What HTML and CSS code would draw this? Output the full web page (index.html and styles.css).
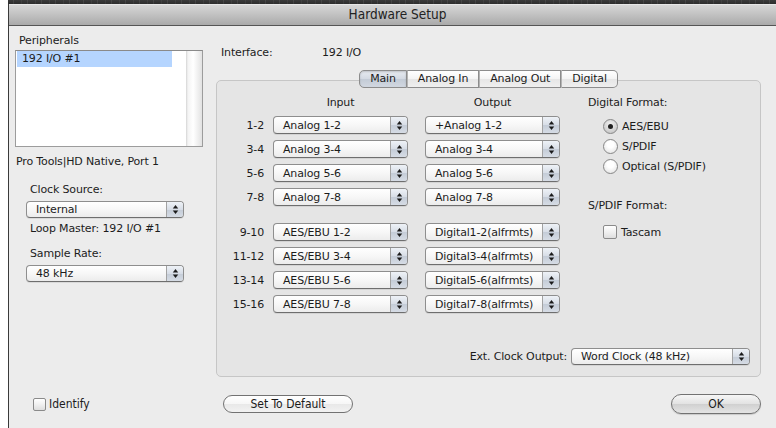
FILE: index.html
```html
<!DOCTYPE html>
<html lang="en">
<head>
<meta charset="utf-8">
<title>Hardware Setup</title>
<link rel="stylesheet" href="styles.css">
</head>
<body>
<div class="desk-strip"></div>
<div class="window">
  <div class="titlebar">Hardware Setup</div>

  <div class="content">
    <div class="left">
      <div class="peri-label">Peripherals</div>
      <div class="listbox">
        <div class="list-rows">
          <div class="list-row selected">192 I/O #1</div>
        </div>
        <div class="list-scroll"></div>
      </div>
      <div class="port">Pro Tools|HD Native, Port 1</div>

      <div class="field-label clock-label">Clock Source:</div>
      <div class="popup popup-side">
        <span class="popup-text">Internal</span>
        <span class="popup-arrows"><svg width="7" height="11" viewBox="0 0 7 11"><polygon points="3.5,1 6.2,4.6 0.8,4.6"/><polygon points="0.8,6.4 6.2,6.4 3.5,10"/></svg></span>
      </div>
      <div class="field-label loop-label">Loop Master: 192 I/O #1</div>
      <div class="field-label rate-label">Sample Rate:</div>
      <div class="popup popup-side">
        <span class="popup-text">48 kHz</span>
        <span class="popup-arrows"><svg width="7" height="11" viewBox="0 0 7 11"><polygon points="3.5,1 6.2,4.6 0.8,4.6"/><polygon points="0.8,6.4 6.2,6.4 3.5,10"/></svg></span>
      </div>
    </div>

    <div class="right">
      <div class="iface"><span class="iface-key">Interface:</span><span>192 I/O</span></div>

      <div class="tabs">
        <div class="tab active">Main</div>
        <div class="tab">Analog In</div>
        <div class="tab">Analog Out</div>
        <div class="tab">Digital</div>
      </div>

      <div class="group">
        <div class="group-main">
          <div class="io">
            <div class="io-head">
              <span class="io-gutter"></span>
              <span class="io-col">Input</span>
              <span class="io-col io-out">Output</span>
            </div>

            <div class="io-row">
              <span class="ch">1-2</span>
              <div class="popup"><span class="popup-text">Analog 1-2</span><span class="popup-arrows"><svg width="7" height="11" viewBox="0 0 7 11"><polygon points="3.5,1 6.2,4.6 0.8,4.6"/><polygon points="0.8,6.4 6.2,6.4 3.5,10"/></svg></span></div>
              <div class="popup io-out"><span class="popup-text">+Analog 1-2</span><span class="popup-arrows"><svg width="7" height="11" viewBox="0 0 7 11"><polygon points="3.5,1 6.2,4.6 0.8,4.6"/><polygon points="0.8,6.4 6.2,6.4 3.5,10"/></svg></span></div>
            </div>
            <div class="io-row">
              <span class="ch">3-4</span>
              <div class="popup"><span class="popup-text">Analog 3-4</span><span class="popup-arrows"><svg width="7" height="11" viewBox="0 0 7 11"><polygon points="3.5,1 6.2,4.6 0.8,4.6"/><polygon points="0.8,6.4 6.2,6.4 3.5,10"/></svg></span></div>
              <div class="popup io-out"><span class="popup-text">Analog 3-4</span><span class="popup-arrows"><svg width="7" height="11" viewBox="0 0 7 11"><polygon points="3.5,1 6.2,4.6 0.8,4.6"/><polygon points="0.8,6.4 6.2,6.4 3.5,10"/></svg></span></div>
            </div>
            <div class="io-row">
              <span class="ch">5-6</span>
              <div class="popup"><span class="popup-text">Analog 5-6</span><span class="popup-arrows"><svg width="7" height="11" viewBox="0 0 7 11"><polygon points="3.5,1 6.2,4.6 0.8,4.6"/><polygon points="0.8,6.4 6.2,6.4 3.5,10"/></svg></span></div>
              <div class="popup io-out"><span class="popup-text">Analog 5-6</span><span class="popup-arrows"><svg width="7" height="11" viewBox="0 0 7 11"><polygon points="3.5,1 6.2,4.6 0.8,4.6"/><polygon points="0.8,6.4 6.2,6.4 3.5,10"/></svg></span></div>
            </div>
            <div class="io-row">
              <span class="ch">7-8</span>
              <div class="popup"><span class="popup-text">Analog 7-8</span><span class="popup-arrows"><svg width="7" height="11" viewBox="0 0 7 11"><polygon points="3.5,1 6.2,4.6 0.8,4.6"/><polygon points="0.8,6.4 6.2,6.4 3.5,10"/></svg></span></div>
              <div class="popup io-out"><span class="popup-text">Analog 7-8</span><span class="popup-arrows"><svg width="7" height="11" viewBox="0 0 7 11"><polygon points="3.5,1 6.2,4.6 0.8,4.6"/><polygon points="0.8,6.4 6.2,6.4 3.5,10"/></svg></span></div>
            </div>

            <div class="io-spacer"></div>

            <div class="io-row">
              <span class="ch">9-10</span>
              <div class="popup"><span class="popup-text">AES/EBU 1-2</span><span class="popup-arrows"><svg width="7" height="11" viewBox="0 0 7 11"><polygon points="3.5,1 6.2,4.6 0.8,4.6"/><polygon points="0.8,6.4 6.2,6.4 3.5,10"/></svg></span></div>
              <div class="popup io-out"><span class="popup-text">Digital1-2(alfrmts)</span><span class="popup-arrows"><svg width="7" height="11" viewBox="0 0 7 11"><polygon points="3.5,1 6.2,4.6 0.8,4.6"/><polygon points="0.8,6.4 6.2,6.4 3.5,10"/></svg></span></div>
            </div>
            <div class="io-row">
              <span class="ch">11-12</span>
              <div class="popup"><span class="popup-text">AES/EBU 3-4</span><span class="popup-arrows"><svg width="7" height="11" viewBox="0 0 7 11"><polygon points="3.5,1 6.2,4.6 0.8,4.6"/><polygon points="0.8,6.4 6.2,6.4 3.5,10"/></svg></span></div>
              <div class="popup io-out"><span class="popup-text">Digital3-4(alfrmts)</span><span class="popup-arrows"><svg width="7" height="11" viewBox="0 0 7 11"><polygon points="3.5,1 6.2,4.6 0.8,4.6"/><polygon points="0.8,6.4 6.2,6.4 3.5,10"/></svg></span></div>
            </div>
            <div class="io-row">
              <span class="ch">13-14</span>
              <div class="popup"><span class="popup-text">AES/EBU 5-6</span><span class="popup-arrows"><svg width="7" height="11" viewBox="0 0 7 11"><polygon points="3.5,1 6.2,4.6 0.8,4.6"/><polygon points="0.8,6.4 6.2,6.4 3.5,10"/></svg></span></div>
              <div class="popup io-out"><span class="popup-text">Digital5-6(alfrmts)</span><span class="popup-arrows"><svg width="7" height="11" viewBox="0 0 7 11"><polygon points="3.5,1 6.2,4.6 0.8,4.6"/><polygon points="0.8,6.4 6.2,6.4 3.5,10"/></svg></span></div>
            </div>
            <div class="io-row">
              <span class="ch">15-16</span>
              <div class="popup"><span class="popup-text">AES/EBU 7-8</span><span class="popup-arrows"><svg width="7" height="11" viewBox="0 0 7 11"><polygon points="3.5,1 6.2,4.6 0.8,4.6"/><polygon points="0.8,6.4 6.2,6.4 3.5,10"/></svg></span></div>
              <div class="popup io-out"><span class="popup-text">Digital7-8(alfrmts)</span><span class="popup-arrows"><svg width="7" height="11" viewBox="0 0 7 11"><polygon points="3.5,1 6.2,4.6 0.8,4.6"/><polygon points="0.8,6.4 6.2,6.4 3.5,10"/></svg></span></div>
            </div>
          </div>

          <div class="digital">
            <div class="dig-head">Digital Format:</div>
            <div class="radios">
              <div class="opt"><span class="radio on"></span><span>AES/EBU</span></div>
              <div class="opt"><span class="radio"></span><span>S/PDIF</span></div>
              <div class="opt"><span class="radio"></span><span>Optical (S/PDIF)</span></div>
            </div>
            <div class="dig-head spdif-head">S/PDIF Format:</div>
            <div class="radios tascam">
              <div class="opt"><span class="check"></span><span>Tascam</span></div>
            </div>
          </div>
        </div>

        <div class="ext-clock">
          <span class="ext-label">Ext. Clock Output:</span>
          <div class="popup popup-ext"><span class="popup-text">Word Clock (48 kHz)</span><span class="popup-arrows"><svg width="7" height="11" viewBox="0 0 7 11"><polygon points="3.5,1 6.2,4.6 0.8,4.6"/><polygon points="0.8,6.4 6.2,6.4 3.5,10"/></svg></span></div>
        </div>
      </div>
    </div>
  </div>

  <div class="footer">
    <div class="footer-left">
      <span class="check check-small"></span><span class="identify">Identify</span>
    </div>
    <div class="btn btn-default">Set To Default</div>
    <div class="btn btn-ok">OK</div>
  </div>
</div>
</body>
</html>
```

FILE: styles.css
```css
html, body {
  margin: 0;
  padding: 0;
  background: #ffffff;
}

body {
  width: 776px;
  height: 428px;
  overflow: hidden;
  font-family: "DejaVu Sans", "Liberation Sans", sans-serif;
  font-size: 11px;
  letter-spacing: -0.15px;
  color: #1c1c1c;
}

/* dark desktop edge above the sheet */
.desk-strip {
  height: 4px;
  margin-left: 8px;
  background:
    repeating-linear-gradient(90deg, transparent 0 5px, rgba(255, 255, 255, 0.08) 5px 6px, transparent 6px 13px, rgba(255, 255, 255, 0.05) 13px 14px),
    linear-gradient(#3a3a3a, #2c2c2c);
}

.window {
  margin-left: 8px;
  border-left: 1px solid #3a3a3a;
  background: #ececec;
  height: 424px;
  box-sizing: border-box;
  overflow: hidden;
}

.titlebar {
  height: 21px;
  line-height: 21px;
  border-bottom: 1px solid #555555;
  background: linear-gradient(#d8d8d8, #c4c4c4 45%, #aaaaaa);
  box-shadow: inset 0 1px 0 #e6e6e6;
  text-align: center;
  font-family: "DejaVu Sans Condensed", "DejaVu Sans", sans-serif;
  font-size: 13.5px;
  letter-spacing: 0;
  color: #222222;
  padding-left: 10px;
}

.content {
  display: flex;
  padding-top: 8px;
}

/* ---------- left column ---------- */
.left {
  width: 207px;
  padding-left: 6px;
  box-sizing: border-box;
  line-height: 13px;
}

.peri-label {
  margin-left: 4px;
}

.listbox {
  margin-top: 3px;
  width: 188px;
  height: 97px;
  box-sizing: border-box;
  border: 1px solid #9c9c9c;
  border-top-color: #8a8a8a;
  background: #ffffff;
  display: flex;
}

.list-rows {
  flex: 1;
}

.list-row {
  height: 16px;
  line-height: 16px;
  width: 155px;
  margin-left: 1px;
  padding-left: 5px;
  box-sizing: border-box;
}

.list-row.selected {
  background: #b5d5ff;
}

.list-scroll {
  width: 16px;
  background: linear-gradient(90deg, #d5d5d5 0, #f4f4f4 2px, #ffffff 45%, #e2e2e2 100%);
}

.port {
  margin-top: 8px;
  margin-left: 1px;
}

.field-label {
  margin-left: 15px;
}

.clock-label { margin-top: 15px; }
.loop-label { margin-top: 4px; }
.rate-label { margin-top: 12px; }

/* ---------- popup menus ---------- */
.popup {
  display: flex;
  width: 135px;
  height: 18px;
  box-sizing: border-box;
  border: 1px solid #8e8e8e;
  border-bottom-color: #6e6e6e;
  border-radius: 4px;
  background: linear-gradient(#ffffff, #f7f7f7 50%, #ececec);
  box-shadow: 0 1px 0 rgba(0, 0, 0, 0.08);
}

.popup-side {
  width: 158px;
  height: 17px;
  margin-top: 5px;
  margin-left: 11px;
}

.popup-text {
  flex: 1;
  padding-left: 9px;
  white-space: nowrap;
  overflow: hidden;
  display: flex;
  align-items: center;
}

.popup-arrows {
  width: 16px;
  border-left: 1px solid #a2a2a2;
  border-radius: 0 3px 3px 0;
  background: linear-gradient(#eef2f7, #d7dde6 50%, #c4ccd7 51%, #d6dce5);
  display: flex;
  align-items: center;
  justify-content: center;
}

.popup-arrows svg {
  fill: #1b1b1b;
}

/* ---------- right column ---------- */
.right {
  width: 545px;
}

.iface {
  margin-top: 12px;
  padding-left: 5px;
  line-height: 13px;
  display: flex;
}

.iface-key {
  width: 101px;
}

.tabs {
  margin-top: 11px;
  display: flex;
  justify-content: center;
  position: relative;
  z-index: 1;
}

.tab {
  height: 18px;
  line-height: 16px;
  box-sizing: border-box;
  padding: 0 10px;
  border: 1px solid #8c8c8c;
  border-left: 1px solid #b4b4b4;
  background: linear-gradient(#ffffff, #f4f4f4 50%, #e6e6e6 51%, #efefef);
}

.tab:first-child {
  border-left-color: #8c8c8c;
  border-radius: 5px 0 0 5px;
}

.tab:last-child {
  border-radius: 0 5px 5px 0;
}

.tab.active {
  background: linear-gradient(#e7ebf1, #d3d9e2 50%, #c3cbd6 51%, #d2d8e1);
  box-shadow: inset 0 1px 2px rgba(0, 0, 0, 0.18);
}

.group {
  margin-top: -8px;
  height: 297px;
  box-sizing: border-box;
  border: 1px solid #c6c6c6;
  border-radius: 5px;
  background: #e5e5e5;
  padding: 15px 10px 11px 0;
  display: flex;
  flex-direction: column;
}

.group-main {
  display: flex;
}

.io {
  width: 343px;
}

.io-head {
  display: flex;
  line-height: 13px;
  margin-bottom: 4px;
}

.io-gutter {
  width: 56px;
}

.io-col {
  width: 135px;
  text-align: center;
}

.io-out {
  margin-left: 17px;
}

.io-row {
  display: flex;
  align-items: center;
  height: 24px;
}

.ch {
  width: 47px;
  margin-right: 9px;
  text-align: right;
}

.io-spacer {
  height: 11px;
}

.digital {
  margin-left: 28px;
  line-height: 13px;
}

.radios {
  margin-top: 7px;
  margin-left: 15px;
}

.opt {
  display: flex;
  align-items: center;
  height: 20px;
}

.radio {
  width: 15px;
  height: 15px;
  box-sizing: border-box;
  border-radius: 50%;
  border: 1px solid #878787;
  background: radial-gradient(circle at 50% 35%, #ffffff 30%, #dedede 100%);
  margin-right: 4px;
  display: flex;
  align-items: center;
  justify-content: center;
}

.radio.on {
  background: radial-gradient(circle at 50% 35%, #e8e8e8 20%, #bdbdbd 100%);
}

.radio.on::after {
  content: "";
  width: 5px;
  height: 5px;
  border-radius: 50%;
  background: #202020;
}

.spdif-head {
  margin-top: 23px;
}

.tascam {
  margin-top: 10px;
}

.check {
  width: 14px;
  height: 14px;
  box-sizing: border-box;
  border: 1px solid #8a8a8a;
  border-radius: 2px;
  background: linear-gradient(#ffffff, #f0f0f0 50%, #dedede);
  margin-right: 4px;
}

.ext-clock {
  margin-top: auto;
  display: flex;
  align-items: center;
  justify-content: flex-end;
}

.ext-label {
  margin-right: 4px;
}

.popup-ext {
  width: 179px;
  height: 17px;
}

/* ---------- footer ---------- */
.footer {
  display: flex;
  align-items: center;
  height: 20px;
  margin-top: 17px;
  padding-right: 15px;
  font-family: "DejaVu Sans Condensed", "DejaVu Sans", sans-serif;
  font-size: 12px;
  letter-spacing: 0;
}

.footer-left {
  width: 208px;
  padding-left: 24px;
  box-sizing: border-box;
  display: flex;
  align-items: center;
}

.check-small {
  width: 13px;
  height: 13px;
  margin-right: 3px;
}

.btn {
  box-sizing: border-box;
  border: 1px solid #727272;
  display: flex;
  align-items: center;
  justify-content: center;
  color: #1a1a1a;
}

.btn-default {
  margin-left: 6px;
  width: 130px;
  height: 18px;
  border-radius: 9px;
  background: linear-gradient(#ffffff, #f6f6f6 50%, #e8e8e8 51%, #f2f2f2);
}

.btn-ok {
  margin-left: auto;
  width: 90px;
  height: 20px;
  border-radius: 10px;
  background: linear-gradient(#f6f6f6, #e2e2e2 50%, #d0d0d0 51%, #e4e4e4);
  box-shadow: 0 1px 1px rgba(0, 0, 0, 0.15);
}
```
